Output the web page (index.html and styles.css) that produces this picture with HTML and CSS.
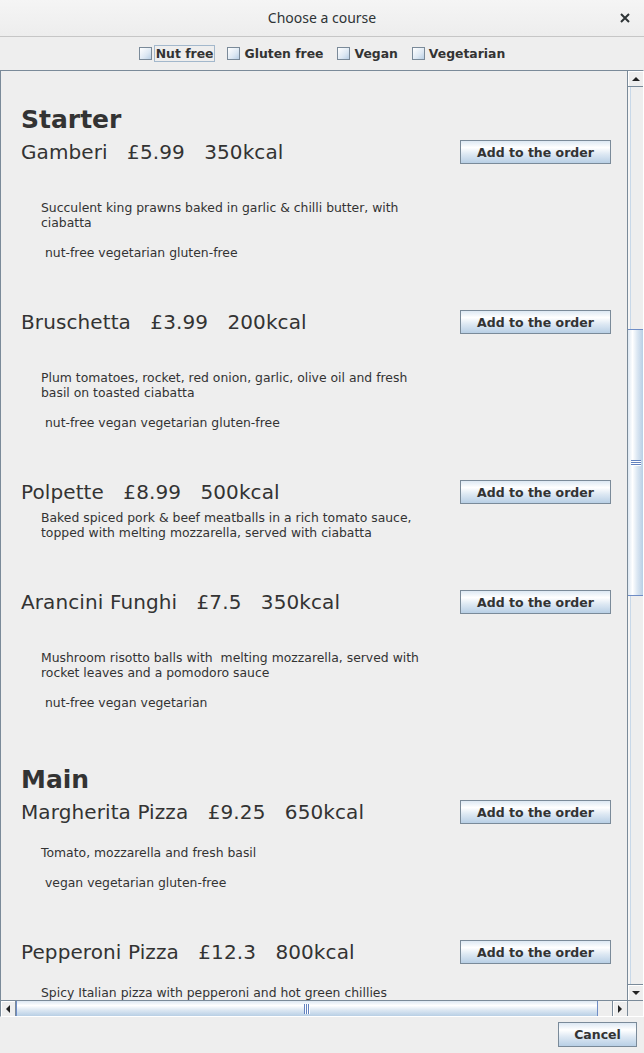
FILE: index.html
```html
<!DOCTYPE html>
<html>
<head>
<meta charset="utf-8">
<title>Choose a course</title>
<link rel="stylesheet" href="styles.css">
</head>
<body>
<div class="window">
  <header class="titlebar">
    <span></span>
    <span class="title">Choose a course</span>
    <span class="close"><svg width="10" height="10" viewBox="0 0 10 10"><path d="M1 1 L9 9 M9 1 L1 9" stroke="#2e3436" stroke-width="2" fill="none"/></svg></span>
  </header>
  <div class="filters">
    <label class="chk"><span class="box"></span><span class="chk-label focused">Nut free</span></label>
    <label class="chk"><span class="box"></span><span class="chk-label">Gluten free</span></label>
    <label class="chk"><span class="box"></span><span class="chk-label">Vegan</span></label>
    <label class="chk"><span class="box"></span><span class="chk-label">Vegetarian</span></label>
  </div>
  <div class="scrollpane">
    <div class="viewport">
      <div class="content">
        <h2 class="course">Starter</h2>
        <div class="item">
          <div class="item-head"><span class="item-title">Gamberi   £5.99   350kcal</span><button class="btn">Add to the order</button></div>
          <div class="item-body"><p class="desc">Succulent king prawns baked in garlic &amp; chilli butter, with ciabatta</p><p class="tags"> nut-free vegetarian gluten-free</p></div>
        </div>
        <div class="item">
          <div class="item-head"><span class="item-title">Bruschetta   £3.99   200kcal</span><button class="btn">Add to the order</button></div>
          <div class="item-body"><p class="desc">Plum tomatoes, rocket, red onion, garlic, olive oil and fresh basil on toasted ciabatta</p><p class="tags"> nut-free vegan vegetarian gluten-free</p></div>
        </div>
        <div class="item">
          <div class="item-head"><span class="item-title">Polpette   £8.99   500kcal</span><button class="btn">Add to the order</button></div>
          <div class="item-body"><p class="desc">Baked spiced pork &amp; beef meatballs in a rich tomato sauce, topped with melting mozzarella, served with ciabatta</p></div>
        </div>
        <div class="item">
          <div class="item-head"><span class="item-title">Arancini Funghi   £7.5   350kcal</span><button class="btn">Add to the order</button></div>
          <div class="item-body"><p class="desc">Mushroom risotto balls with  melting mozzarella, served with rocket leaves and a pomodoro sauce</p><p class="tags"> nut-free vegan vegetarian</p></div>
        </div>
        <h2 class="course">Main</h2>
        <div class="item">
          <div class="item-head"><span class="item-title">Margherita Pizza   £9.25   650kcal</span><button class="btn">Add to the order</button></div>
          <div class="item-body"><p class="desc">Tomato, mozzarella and fresh basil</p><p class="tags"> vegan vegetarian gluten-free</p></div>
        </div>
        <div class="item">
          <div class="item-head"><span class="item-title">Pepperoni Pizza   £12.3   800kcal</span><button class="btn">Add to the order</button></div>
          <div class="item-body"><p class="desc">Spicy Italian pizza with pepperoni and hot green chillies</p><p class="tags"></p></div>
        </div>
      </div>
    </div>
    <div class="vbar">
      <div class="sb-btn sb-btn-v"><svg width="8" height="4" viewBox="0 0 8 4"><polygon points="0,4 4,0 8,4" fill="#222"/></svg></div>
      <div class="track-v"><div class="thumb-v"><span class="grip-v"></span></div></div>
      <div class="sb-btn sb-btn-v sb-btn-down"><svg width="8" height="4" viewBox="0 0 8 4"><polygon points="0,0 8,0 4,4" fill="#222"/></svg></div>
    </div>
    <div class="hbar">
      <div class="sb-btn sb-btn-h"><svg width="4" height="8" viewBox="0 0 4 8"><polygon points="4,0 4,8 0,4" fill="#222"/></svg></div>
      <div class="track-h"><div class="thumb-h"><span class="grip-h"></span></div></div>
      <div class="sb-btn sb-btn-h sb-btn-right"><svg width="4" height="8" viewBox="0 0 4 8"><polygon points="0,0 4,4 0,8" fill="#222"/></svg></div>
    </div>
    <div class="corner"></div>
  </div>
  <div class="footer">
    <button class="btn btn-cancel">Cancel</button>
  </div>
</div>
</body>
</html>
```
FILE: styles.css
```css
* { box-sizing: border-box; margin: 0; padding: 0; }
html, body { width: 644px; height: 1053px; overflow: hidden; }
body {
  background: #eeeeee;
  font-family: "DejaVu Sans", sans-serif;
  color: #333333;
}
.window { display: flex; flex-direction: column; height: 1053px; }

.titlebar {
  flex: none;
  height: 37px;
  display: grid;
  grid-template-columns: 1fr auto 1fr;
  align-items: center;
  background: linear-gradient(#f5f5f5, #ededed);
  border-bottom: 1px solid #c6c6c6;
  font-family: "Noto Sans", "DejaVu Sans", sans-serif;
  font-size: 14px;
  color: #2e3436;
}
.title { padding-bottom: 1px; }
.close { justify-self: end; margin-right: 14px; display: flex; }

.filters {
  flex: none;
  height: 33px;
  display: flex;
  justify-content: center;
  align-items: center;
  gap: 12px;
  padding-left: 2px;
}
.chk { display: flex; align-items: center; gap: 2px; }
.box {
  width: 13px; height: 13px;
  border: 1px solid #7a8a99;
  background: linear-gradient(135deg, #ffffff 0%, #dde8f3 60%, #b8cfe5 100%);
}
.chk-label {
  font-size: 12.4px;
  font-weight: bold;
  line-height: 15px;
  padding: 0 1px;
  border: 1px solid transparent;
}
.chk-label.focused { border-color: #a3b8cc; }

.scrollpane {
  flex: none;
  height: 947px;
  border: 1px solid #7a8a99;
  border-right-color: #ffffff;
  border-bottom-color: #ffffff;
  display: grid;
  grid-template-columns: 626px 16px;
  grid-template-rows: 929px 16px;
}
.viewport { overflow: hidden; background: #eeeeee; }
.content { padding: 29px 16px 0 20px; }
.course { font-size: 25px; font-weight: bold; line-height: 40px; height: 40px; }
.item { display: grid; grid-auto-rows: 1fr; margin-bottom: 50px; }
.item-head { display: flex; justify-content: space-between; align-items: flex-start; }
.item-title { font-size: 20px; line-height: 24px; white-space: pre; letter-spacing: 0.1px; }
.item-body { padding-left: 20px; font-size: 12.4px; line-height: 15px; }
.desc { width: 390px; white-space: pre-wrap; }
.tags { margin-top: 15px; min-height: 15px; white-space: pre; }

.btn {
  flex: none;
  width: 151px;
  height: 24px;
  border: 1px solid #7a8a99;
  background: linear-gradient(#dde8f3 0%, #ffffff 30%, #dde8f3 60%, #b8cfe5 100%);
  font-family: "DejaVu Sans", sans-serif;
  font-size: 12.5px;
  font-weight: bold;
  color: #333333;
}

.vbar {
  display: flex;
  flex-direction: column;
  border-left: 1px solid #7a8a99;
}
.sb-btn {
  flex: none;
  display: flex;
  align-items: center;
  justify-content: center;
  background: #eeeeee;
  box-shadow: inset 1px 1px 0 #ffffff;
}
.sb-btn-v { height: 16px; border-bottom: 1px solid #7a8a99; }
.sb-btn-down { border-bottom: none; border-top: 1px solid #7a8a99; }
.track-v {
  flex: 1;
  display: flex;
  flex-direction: column;
  background: #eeeeee;
  box-shadow: inset 2px 0 0 #f6f6f6, inset 3px 0 0 #c8d8e8;
}
.thumb-v {
  margin-top: 242px;
  height: 267px;
  border-top: 1px solid #6f8dc6;
  border-bottom: 1px solid #6f8dc6;
  background: linear-gradient(90deg, #dde8f3 0%, #ffffff 30%, #dde8f3 60%, #b8cfe5 100%);
  display: flex;
  align-items: center;
  justify-content: center;
}
.grip-v {
  width: 10px; height: 6px;
  background: repeating-linear-gradient(#6382bf 0 1px, #ffffff 1px 2px);
}

.hbar {
  display: flex;
  border-top: 1px solid #7a8a99;
}
.sb-btn-h { width: 15px; border-right: 1px solid #7a8a99; }
.sb-btn-right { border-right: none; border-left: 1px solid #7a8a99; }
.track-h {
  flex: 1;
  display: flex;
  background: #eeeeee;
}
.thumb-h {
  width: 582px;
  border-left: 1px solid #6f8dc6;
  border-right: 1px solid #6f8dc6;
  background: linear-gradient(#dde8f3 0%, #ffffff 30%, #dde8f3 60%, #b8cfe5 100%);
  display: flex;
  align-items: center;
  justify-content: center;
}
.grip-h {
  width: 6px; height: 10px;
  background: repeating-linear-gradient(90deg, #6382bf 0 1px, #ffffff 1px 2px);
}
.corner { background: #eeeeee; border-left: 1px solid #7a8a99; border-top: 1px solid #7a8a99; }

.footer {
  flex: 1;
  display: flex;
  justify-content: flex-end;
  align-items: flex-start;
  padding: 5px 7px 0 0;
}
.btn-cancel { width: 79px; height: 25px; }
```
